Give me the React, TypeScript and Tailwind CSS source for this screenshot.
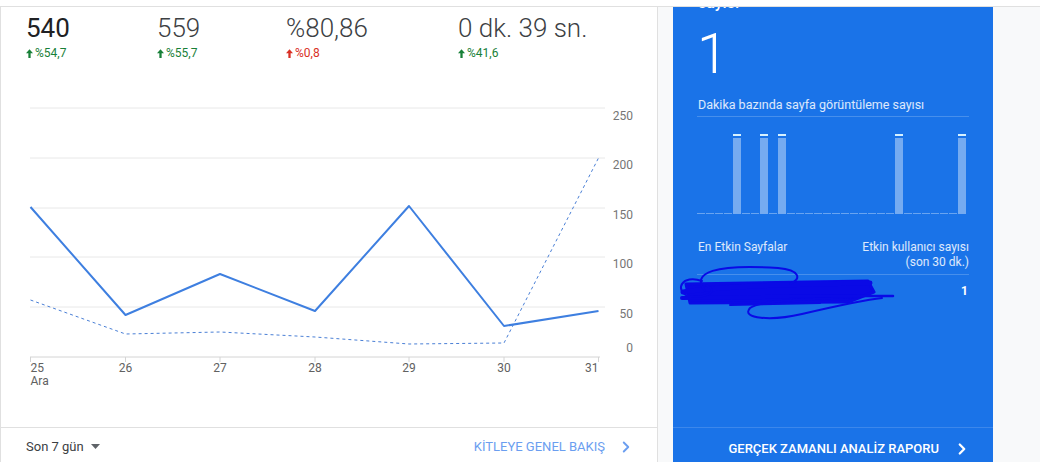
import { ChevronRight } from 'lucide-react'

const font = { fontFamily: 'Roboto, "Liberation Sans", sans-serif' }

type Stat = { value: string; change: string; up: boolean; good: boolean; width: string; main?: boolean }

const stats: Stat[] = [
  { value: '540', change: '%54,7', up: true, good: true, width: 'w-[131px]', main: true },
  { value: '559', change: '%55,7', up: true, good: true, width: 'w-[129px]' },
  { value: '%80,86', change: '%0,8', up: true, good: false, width: 'w-[172px]' },
  { value: '0 dk. 39 sn.', change: '%41,6', up: true, good: true, width: 'w-[160px]' },
]

// chart data in plot pixels (page coords)
const days = ['25', '26', '27', '28', '29', '30', '31']
const xs = [30.5, 125.5, 220, 315, 409, 504, 598.5]
const users = [207, 315, 274, 311, 206, 326, 311]
const prev = [300, 334, 332, 337, 344, 343, 158]
const grid = [108, 158, 208, 257, 307]
const yLabels: [string, number][] = [
  ['250', 116],
  ['200', 165],
  ['150', 215],
  ['100', 264],
  ['50', 314],
  ['0', 348],
]

const activeMinutes = [4, 7, 9, 22, 29]

const UpArrow = () => (
  <svg width="7" height="9" viewBox="0 0 8 10" className="shrink-0">
    <path d="M4 0 L8 4.6 H5.3 V10 H2.7 V4.6 H0 Z" fill="currentColor" />
  </svg>
)

const StatItem = ({ value, change, good, width, main }: Stat) => (
  <div className={`${width} flex flex-col`}>
    <span
      className={`h-[32px] text-[26px] leading-[32px] whitespace-nowrap ${
        main ? 'text-[#202124] font-normal' : 'text-[#3c4043] font-light'
      }`}
    >
      {value}
    </span>
    <span
      className={`mt-[1px] flex h-[16px] items-center gap-[2px] text-[12px] leading-[16px] ${
        good ? 'text-[#188038]' : 'text-[#d93025]'
      }`}
    >
      <UpArrow />
      {change}
    </span>
  </div>
)

const pts = (ys: number[]) => xs.map((x, i) => `${x},${ys[i]}`).join(' ')

const labelAnchor = (i: number) => (i === 0 ? 'start' : i === days.length - 1 ? 'end' : 'middle')

const TrendChart = () => (
  <svg width="656" height="300" viewBox="1 95 656 300" style={font}>
    {grid.map((y) => (
      <line key={y} x1="30" x2="605" y1={y} y2={y} stroke="#e8e8e8" strokeWidth="1" />
    ))}
    <line x1="30" x2="600" y1="357" y2="357" stroke="#d4d4d4" strokeWidth="1" />
    {xs.map((x) => (
      <line key={x} x1={x} x2={x} y1="357" y2="362" stroke="#d4d4d4" strokeWidth="1" />
    ))}
    <polyline points={pts(prev)} fill="none" stroke="#4a7fd6" strokeWidth="1" strokeDasharray="3 3" />
    <polyline points={pts(users)} fill="none" stroke="#3e7fe0" strokeWidth="2" strokeLinejoin="round" />
    {yLabels.map(([t, y]) => (
      <text key={t} x="633" y={y + 4} textAnchor="end" fontSize="12" fill="#757575">
        {t}
      </text>
    ))}
    {days.map((d, i) => (
      <text key={d} x={xs[i]} y="372" fontSize="12" fill="#616161" textAnchor={labelAnchor(i)}>
        {d}
      </text>
    ))}
    <text x="30.5" y="385" fontSize="12" fill="#616161">
      Ara
    </text>
  </svg>
)

const Overview = () => (
  <div className="flex h-[458px] w-[658px] shrink-0 flex-col border-x border-[#e0e0e0] bg-white">
    <div className="flex h-[88px] pl-[25px] pt-[5px]">
      {stats.map((s) => (
        <StatItem key={s.value} {...s} />
      ))}
    </div>
    <TrendChart />
    <div className="flex-1" />
    <div className="flex h-[38px] items-center justify-between border-t border-[#e0e0e0] pl-[25px] pr-[22px] text-[13px]">
      <button type="button" className="flex items-center gap-[7px] text-[#3c4043]">
        Son 7 gün
        <svg width="9" height="5" viewBox="0 0 9 5">
          <path d="M0 0 H9 L4.5 5 Z" fill="#5f6368" />
        </svg>
      </button>
      <button type="button" className="flex items-center gap-[12px] text-[#6b9ef0]">
        KİTLEYE GENEL BAKIŞ
        <ChevronRight className="h-[18px] w-[18px]" strokeWidth={2.5} />
      </button>
    </div>
  </div>
)

// hand-drawn blue scribble over the top page row
const Scribble = () => (
  <svg
    width="222"
    height="62"
    viewBox="675 262 222 62"
    className="pointer-events-none absolute left-[2px] top-[255px]"
    fill="none"
    stroke="#0a0ae6"
    strokeLinecap="round"
    strokeLinejoin="round"
  >
    <path d="M686 284 L868 281 L874 292 L848 302 L690 303 Z" fill="#0a0ae6" strokeWidth="3" />
    <path d="M683 292 C720 286 800 284 870 283" strokeWidth="5" />
    <path d="M682 298 L860 296" strokeWidth="4" />
    <path d="M705 291 C690 272 716 264 778 268 C800 270 802 279 790 284" strokeWidth="2" />
    <path d="M702 281 C682 274 674 290 688 296 C700 299 722 293 706 285" strokeWidth="2" />
    <path d="M852 297 C800 300 762 300 750 308 C740 319 772 321 802 314 C832 307 862 300 882 298" strokeWidth="2" />
    <path d="M790 296 L893 296" strokeWidth="2.5" />
    <path d="M730 305 L820 303" strokeWidth="2" />
  </svg>
)

const Realtime = () => (
  <div className="relative flex h-[462px] w-[320px] shrink-0 flex-col overflow-hidden bg-[#1a73e8] px-[24px] text-white">
    <div className="-mt-[14px] pl-[1px] text-[16px] font-medium leading-[20px]">sayısı</div>
    <div className="mt-[13px] h-[56px] text-[56px] font-light leading-[56px]">1</div>
    <div className="mt-[15px] border-b border-white/20 pb-[3px] pl-[1px] text-[12.5px] leading-[16px] text-white/85">
      Dakika bazında sayfa görüntüleme sayısı
    </div>
    <div className="mt-[17px] flex h-[80px] items-end gap-[1px]">
      {Array.from({ length: 30 }, (_, i) =>
        activeMinutes.includes(i) ? (
          <div key={i} className="flex h-full w-[8px] flex-col">
            <div className="h-[2px] bg-[#d6f1ff]" />
            <div className="mt-[2px] flex-1 bg-white/40" />
          </div>
        ) : (
          <div key={i} className="h-[1px] w-[8px] bg-white/35" />
        ),
      )}
    </div>
    <div className="mt-[26px] flex items-start justify-between border-b border-white/20 pb-[4px] text-[12px] leading-[15px] text-white/85">
      <span className="pl-[1px]">En Etkin Sayfalar</span>
      <span className="text-right">
        Etkin kullanıcı sayısı
        <br />
        (son 30 dk.)
      </span>
    </div>
    <div className="flex h-[31px] items-center justify-end pr-[1px] text-[12px] font-bold">1</div>
    <Scribble />
    <div className="flex-1" />
    <div className="-mx-[24px] flex h-[42px] items-center justify-end gap-[14px] border-t border-white/15 pr-[22px] text-[13px] font-medium">
      GERÇEK ZAMANLI ANALİZ RAPORU
      <ChevronRight className="h-[18px] w-[18px]" strokeWidth={3} />
    </div>
  </div>
)

export default function App() {
  return (
    <div className="flex h-[462px] w-[1040px] flex-col overflow-hidden bg-[#f8f9fa]" style={font}>
      <div className="h-[7px] shrink-0 border-b border-[#e0e0e0] bg-white" />
      <div className="flex gap-[15px]">
        <Overview />
        <Realtime />
      </div>
    </div>
  )
}
